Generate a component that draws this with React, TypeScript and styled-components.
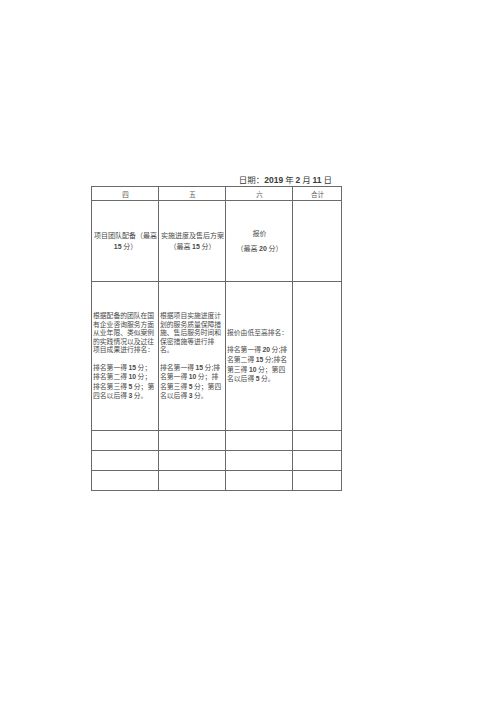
import React from "react"
import styled, { createGlobalStyle } from "styled-components"

const GlobalStyle = createGlobalStyle`
  html, body {
    margin: 0;
    padding: 0;
    background: #ffffff;
  }
  body {
    font-family: "Noto Sans CJK SC", "Liberation Serif", serif;
    color: #444;
  }
`

const Page = styled.div`
  width: 500px;
  height: 707px;
  padding-top: 174px;
  box-sizing: border-box;
`

const Sheet = styled.div`
  width: 250px;
  margin-left: 91px;
`

const DateLine = styled.div`
  text-align: right;
  padding-right: 9px;
  font-size: 8.5px;
  line-height: 11px;
  height: 12px;
  color: #3a3a3a;
  white-space: nowrap;
`

const Num = styled.span`
  font-family: "Liberation Sans", Arial, sans-serif;
  font-weight: bold;
`

const Grid = styled.table`
  border-collapse: collapse;
  table-layout: fixed;
  width: 250px;
`

const Col = styled.col<{ $w: number }>`
  width: ${p => p.$w}px;
`

const Row = styled.tr<{ $h: number }>`
  height: ${p => p.$h}px;
`

const Cell = styled.td<{ $align?: "left" | "center" }>`
  border: 1px solid #6a6a6a;
  padding: 0 0 0 1px;
  vertical-align: middle;
  text-align: ${p => p.$align ?? "center"};
  font-size: 7px;
  color: #4a4a4a;
  overflow: hidden;
`

const HeadCell = styled(Cell)`
  font-size: 6.5px;
  line-height: 10px;
  color: #555;
`

const Lines = styled.div<{ $lh: number; $fs?: number }>`
  line-height: ${p => p.$lh}px;
  font-size: ${p => p.$fs ?? 7}px;
  white-space: nowrap;
`

const Gap = styled.div<{ $h: number }>`
  height: ${p => p.$h}px;
`

const App: React.FC = () => {
  return (
    <Page>
      <GlobalStyle />
      <Sheet>
        <DateLine>
          日期：<Num>2019</Num> 年 <Num>2</Num> 月 <Num>11</Num> 日
        </DateLine>
        <Grid>
          <colgroup>
            <Col $w={67} />
            <Col $w={67} />
            <Col $w={67} />
            <Col $w={49} />
          </colgroup>
          <tbody>
            <Row $h={14}>
              <HeadCell>四</HeadCell>
              <HeadCell>五</HeadCell>
              <HeadCell>六</HeadCell>
              <HeadCell>合计</HeadCell>
            </Row>
            <Row $h={81}>
              <Cell>
                <Lines $lh={11}>
                  项目团队配备（最高<br />
                  <Num>15</Num> 分）
                </Lines>
              </Cell>
              <Cell>
                <Lines $lh={11}>
                  实施进度及售后方案<br />
                  （最高 <Num>15</Num> 分）
                </Lines>
              </Cell>
              <Cell>
                <Lines $lh={11}>
                  报价
                  <Gap $h={4} />
                  （最高 <Num>20</Num> 分）
                </Lines>
              </Cell>
              <Cell />
            </Row>
            <Row $h={149}>
              <Cell $align="left">
                <Lines $lh={8.6} $fs={6.8}>
                  根据配备的团队在国<br />
                  有企业咨询服务方面<br />
                  从业年限、类似案例<br />
                  的实践情况以及过往<br />
                  项目成果进行排名：<br />
                  <br />
                  排名第一得 <Num>15</Num> 分；<br />
                  排名第二得 <Num>10</Num> 分；<br />
                  排名第三得 <Num>5</Num> 分；第<br />
                  四名以后得 <Num>3</Num> 分。
                </Lines>
              </Cell>
              <Cell $align="left">
                <Lines $lh={8.6} $fs={6.8}>
                  根据项目实施进度计<br />
                  划的服务质量保障措<br />
                  施、售后服务时间和<br />
                  保密措施等进行排<br />
                  名。<br />
                  <br />
                  排名第一得 <Num>15</Num> 分;排<br />
                  名第一得 <Num>10</Num> 分；排<br />
                  名第三得 <Num>5</Num> 分；第四<br />
                  名以后得 <Num>3</Num> 分。
                </Lines>
              </Cell>
              <Cell $align="left">
                <Lines $lh={8.6} $fs={6.8}>
                  报价由低至高排名：<br />
                  <br />
                  排名第一得 <Num>20</Num> 分;排<br />
                  名第二得 <Num>15</Num> 分;排名<br />
                  第三得 <Num>10</Num> 分；第四<br />
                  名以后得 <Num>5</Num> 分。
                </Lines>
              </Cell>
              <Cell />
            </Row>
            <Row $h={19.5}>
              <Cell />
              <Cell />
              <Cell />
              <Cell />
            </Row>
            <Row $h={20}>
              <Cell />
              <Cell />
              <Cell />
              <Cell />
            </Row>
            <Row $h={20.5}>
              <Cell />
              <Cell />
              <Cell />
              <Cell />
            </Row>
          </tbody>
        </Grid>
      </Sheet>
    </Page>
  )
}

export default App
